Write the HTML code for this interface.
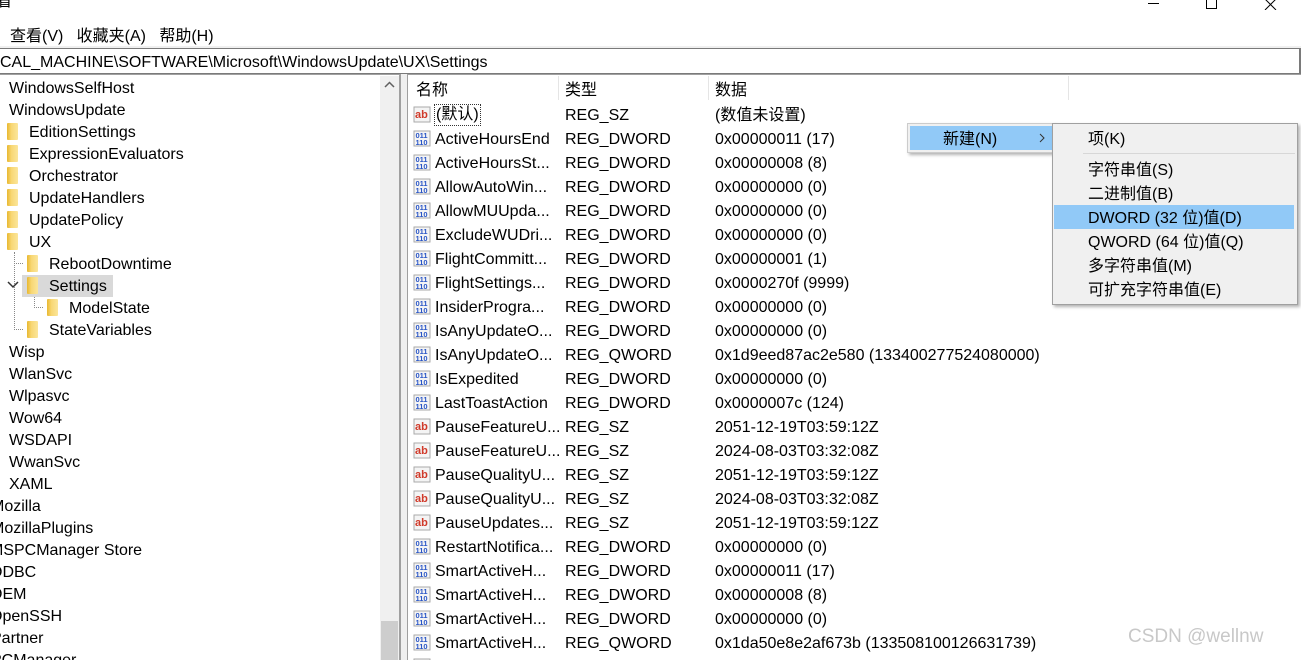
<!DOCTYPE html>
<html style="width:1301px;height:660px;overflow:hidden"><head><meta charset="utf-8"><style>
*{margin:0;padding:0;box-sizing:border-box}
body{width:1301px;height:660px;overflow:hidden;background:#fff;position:relative;font-family:"Liberation Sans","Noto Sans CJK SC",sans-serif;font-size:16px;color:#000}
.a{position:absolute;white-space:nowrap;line-height:22px;padding-top:2px}
.f{position:absolute;width:11px;height:17px;background:linear-gradient(90deg,#e8b830,#f8d774 40%,#fbe59a);border-radius:1px}
.ic{position:absolute;width:18px;height:18px}
.r{position:absolute;left:408px;height:24px;line-height:24px;white-space:nowrap;width:900px}
.r span{position:absolute;top:2px}
.m{position:absolute;white-space:nowrap;line-height:24px;padding-top:2px}
</style></head><body>
<div class="a" style="left:10px;top:24px">查看(V)&nbsp;&nbsp;&nbsp;收藏夹(A)&nbsp;&nbsp;&nbsp;帮助(H)</div>
<div class="a" style="left:-4px;top:-11px">看</div>
<div style="position:absolute;left:1148px;top:3px;width:11px;height:1px;background:#000"></div>
<div style="position:absolute;left:1206px;top:-2px;width:11px;height:11px;border:1px solid #000"></div>
<svg style="position:absolute;left:1264px;top:0" width="14" height="10"><path d="M1 -1L12 10M12 -1L1 10" stroke="#000"/></svg>
<div style="position:absolute;left:0;top:46px;width:1301px;height:2px;background:#f0f0f0"></div>
<div style="position:absolute;left:-2px;top:48px;width:1303px;height:26px;border:1px solid #7a7a7a;border-right-width:2px"></div>
<div class="a" style="left:0;top:50px">CAL_MACHINE\SOFTWARE\Microsoft\WindowsUpdate\UX\Settings</div>
<div style="position:absolute;left:0;top:74px;width:401px;height:586px;border-top:1px solid #a0a0a0"></div>
<div style="position:absolute;left:380px;top:76px;width:19px;height:584px;background:#f0f0f0"></div>
<div style="position:absolute;left:381px;top:621px;width:17px;height:39px;background:#cdcdcd"></div>
<svg style="position:absolute;left:384px;top:81px" width="11" height="8"><path d="M1 6L5.5 1.5L10 6" fill="none" stroke="#606060" stroke-width="1.5"/></svg>
<div style="position:absolute;left:399px;top:74px;width:2px;height:586px;background:#a0a0a0"></div>
<div style="position:absolute;left:401px;top:74px;width:6px;height:586px;background:#f0f0f0"></div>
<div style="position:absolute;left:407px;top:74px;width:1px;height:586px;background:#a0a0a0"></div>
<div style="position:absolute;left:408px;top:74px;width:893px;height:1px;background:#a0a0a0"></div>
<div class="a" style="left:9px;top:76px">WindowsSelfHost</div>
<div class="a" style="left:9px;top:98px">WindowsUpdate</div>
<div class="f" style="left:7px;top:123px"></div><div class="a" style="left:29px;top:120px">EditionSettings</div>
<div class="f" style="left:7px;top:145px"></div><div class="a" style="left:29px;top:142px">ExpressionEvaluators</div>
<div class="f" style="left:7px;top:167px"></div><div class="a" style="left:29px;top:164px">Orchestrator</div>
<div class="f" style="left:7px;top:189px"></div><div class="a" style="left:29px;top:186px">UpdateHandlers</div>
<div class="f" style="left:7px;top:211px"></div><div class="a" style="left:29px;top:208px">UpdatePolicy</div>
<div class="f" style="left:7px;top:233px"></div><div class="a" style="left:29px;top:230px">UX</div>
<div style="position:absolute;left:14px;top:252px;width:0;height:78px;border-left:1px dotted #888"></div>
<div style="position:absolute;left:14px;top:263px;width:9px;border-top:1px dotted #888"></div>
<div style="position:absolute;left:14px;top:329px;width:9px;border-top:1px dotted #888"></div>
<div style="position:absolute;left:34px;top:296px;width:0;height:12px;border-left:1px dotted #888"></div>
<div style="position:absolute;left:34px;top:307px;width:9px;border-top:1px dotted #888"></div>
<div class="f" style="left:27px;top:255px"></div><div class="a" style="left:49px;top:252px">RebootDowntime</div>
<div style="position:absolute;left:22px;top:275px;width:91px;height:22px;background:#d9d9d9"></div>
<svg style="position:absolute;left:7px;top:281px" width="12" height="8"><path d="M1 1L6 6L11 1" fill="none" stroke="#333" stroke-width="1.5"/></svg>
<div class="f" style="left:27px;top:277px"></div><div class="a" style="left:49px;top:274px">Settings</div>
<div class="f" style="left:47px;top:299px"></div><div class="a" style="left:69px;top:296px">ModelState</div>
<div class="f" style="left:27px;top:321px"></div><div class="a" style="left:49px;top:318px">StateVariables</div>
<div class="a" style="left:9px;top:340px">Wisp</div>
<div class="a" style="left:9px;top:362px">WlanSvc</div>
<div class="a" style="left:9px;top:384px">Wlpasvc</div>
<div class="a" style="left:9px;top:406px">Wow64</div>
<div class="a" style="left:9px;top:428px">WSDAPI</div>
<div class="a" style="left:9px;top:450px">WwanSvc</div>
<div class="a" style="left:9px;top:472px">XAML</div>
<div class="a" style="left:-9px;top:494px">Mozilla</div>
<div class="a" style="left:-9px;top:516px">MozillaPlugins</div>
<div class="a" style="left:-10px;top:538px">MSPCManager Store</div>
<div class="a" style="left:-10px;top:560px">ODBC</div>
<div class="a" style="left:-10px;top:582px">OEM</div>
<div class="a" style="left:-10px;top:604px">OpenSSH</div>
<div class="a" style="left:-9px;top:626px">Partner</div>
<div class="a" style="left:-9px;top:648px">PCManager</div>
<div class="a" style="left:416px;top:78px">名称</div>
<div class="a" style="left:565px;top:78px">类型</div>
<div class="a" style="left:715px;top:78px">数据</div>
<div style="position:absolute;left:558px;top:76px;width:1px;height:24px;background:#e5e5e5"></div>
<div style="position:absolute;left:708px;top:76px;width:1px;height:24px;background:#e5e5e5"></div>
<div style="position:absolute;left:1068px;top:76px;width:1px;height:24px;background:#e5e5e5"></div>
<div id="rows"></div>
<script>
var R=[["sz","(默认)","REG_SZ","(数值未设置)"],["d","ActiveHoursEnd","REG_DWORD","0x00000011 (17)"],["d","ActiveHoursSt...","REG_DWORD","0x00000008 (8)"],["d","AllowAutoWin...","REG_DWORD","0x00000000 (0)"],["d","AllowMUUpda...","REG_DWORD","0x00000000 (0)"],["d","ExcludeWUDri...","REG_DWORD","0x00000000 (0)"],["d","FlightCommitt...","REG_DWORD","0x00000001 (1)"],["d","FlightSettings...","REG_DWORD","0x0000270f (9999)"],["d","InsiderProgra...","REG_DWORD","0x00000000 (0)"],["d","IsAnyUpdateO...","REG_DWORD","0x00000000 (0)"],["d","IsAnyUpdateO...","REG_QWORD","0x1d9eed87ac2e580 (133400277524080000)"],["d","IsExpedited","REG_DWORD","0x00000000 (0)"],["d","LastToastAction","REG_DWORD","0x0000007c (124)"],["sz","PauseFeatureU...","REG_SZ","2051-12-19T03:59:12Z"],["sz","PauseFeatureU...","REG_SZ","2024-08-03T03:32:08Z"],["sz","PauseQualityU...","REG_SZ","2051-12-19T03:59:12Z"],["sz","PauseQualityU...","REG_SZ","2024-08-03T03:32:08Z"],["sz","PauseUpdates...","REG_SZ","2051-12-19T03:59:12Z"],["d","RestartNotifica...","REG_DWORD","0x00000000 (0)"],["d","SmartActiveH...","REG_DWORD","0x00000011 (17)"],["d","SmartActiveH...","REG_DWORD","0x00000008 (8)"],["d","SmartActiveH...","REG_DWORD","0x00000000 (0)"],["d","SmartActiveH...","REG_QWORD","0x1da50e8e2af673b (133508100126631739)"],["d","","",""]];
var h="";
R.forEach(function(r,i){var y=102+24*i;
var ic=r[0]=="sz"?'<svg class="ic" style="left:5px;top:4px"><rect x="1" y="1" width="16" height="15" fill="#f4f4f4" stroke="#aaa"/><text x="2" y="12" font-size="11" font-weight="bold" fill="#d03a2a" font-family="Liberation Sans">ab</text></svg>':'<svg class="ic" style="left:5px;top:4px"><rect x="1" y="1" width="16" height="15" fill="#f4f4f4" stroke="#aaa"/><text x="2.5" y="8" font-size="7.5" font-weight="bold" fill="#2a56c6" font-family="Liberation Sans">011</text><text x="2.5" y="15" font-size="7.5" font-weight="bold" fill="#2a56c6" font-family="Liberation Sans">110</text></svg>';
var nm=i==0?'<span style="left:26px;top:2px;line-height:20px;border:1px dotted #333;padding:0 1px">'+r[1]+'</span>':'<span style="left:27px">'+r[1]+'</span>';
h+='<div class="r" style="top:'+y+'px">'+ic+nm+'<span style="left:157px">'+r[2]+'</span><span style="left:307px">'+r[3]+'</span></div>';});
document.getElementById("rows").innerHTML=h;
</script>
<div style="position:absolute;left:907px;top:123px;width:148px;height:30px;background:#f0f0f0;border:1px solid #ccc;box-shadow:2px 2px 3px rgba(0,0,0,.3)"></div>
<div style="position:absolute;left:910px;top:126px;width:142px;height:24px;background:#91c9f7"></div>
<div class="m" style="left:943px;top:126px">新建(N)</div>
<svg style="position:absolute;left:1038px;top:133px" width="8" height="10"><path d="M2 1L6 5L2 9" fill="none" stroke="#333"/></svg>
<div style="position:absolute;left:1052px;top:123px;width:246px;height:182px;background:#f0f0f0;border:1px solid #a0a0a0;box-shadow:2px 2px 3px rgba(0,0,0,.3)"></div>
<div style="position:absolute;left:1083px;top:153px;width:212px;height:1px;background:#d7d7d7"></div>
<div style="position:absolute;left:1054px;top:205px;width:240px;height:24px;background:#91c9f7"></div>
<div class="m" style="left:1088px;top:126px">项(K)</div>
<div class="m" style="left:1088px;top:157px">字符串值(S)</div>
<div class="m" style="left:1088px;top:181px">二进制值(B)</div>
<div class="m" style="left:1088px;top:205px">DWORD (32 位)值(D)</div>
<div class="m" style="left:1088px;top:229px">QWORD (64 位)值(Q)</div>
<div class="m" style="left:1088px;top:253px">多字符串值(M)</div>
<div class="m" style="left:1088px;top:277px">可扩充字符串值(E)</div>
<div class="a" style="left:1128px;top:624px;font-size:19px;color:#c8c8c8">CSDN @wellnw</div>
</body></html>
